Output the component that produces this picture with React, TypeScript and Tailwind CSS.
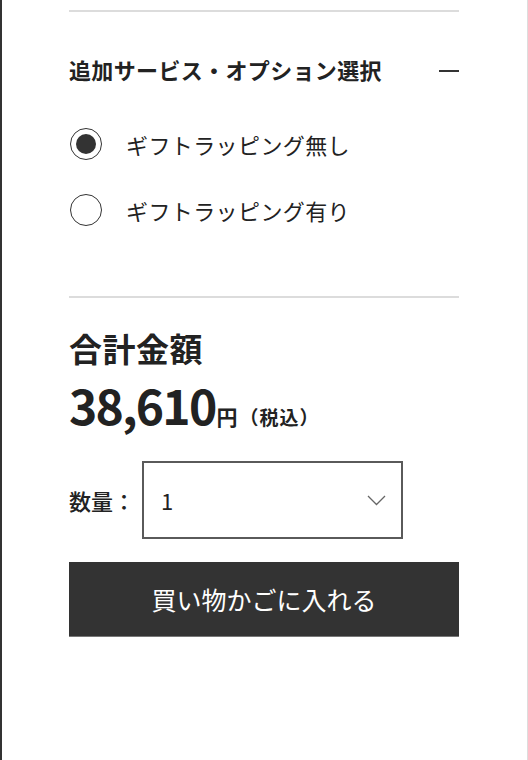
import React from "react";

const font = { fontFamily: '"Noto Sans CJK JP", "Noto Sans", sans-serif' };

function Radio({ checked, label }: { checked: boolean; label: string }) {
  return (
    <div className="flex items-center h-[44px]">
      <div className="ml-[1px] w-[32px] h-[32px] rounded-full border-[1.5px] border-[#333] flex items-center justify-center shrink-0">
        {checked && <div className="w-[20px] h-[20px] rounded-full bg-[#333]" />}
      </div>
      <span className="ml-[24px] text-[22px] leading-[30px] tracking-[0.4px] text-[#222]">{label}</span>
    </div>
  );
}

export default function App() {
  return (
    <div
      className="w-[528px] h-[760px] bg-white border-l-2 border-l-[#333] border-r border-r-[#dddddd] overflow-hidden"
      style={font}
    >
      <div className="ml-[67px] w-[390px]">
        <div className="mt-[10px] h-[2px] bg-[#dcdcdc]" />
        <div className="mt-[33px] h-[48px] flex items-center justify-between">
          <span className="text-[22px] font-bold text-[#222] leading-[30px] tracking-[0.35px]">追加サービス・オプション選択</span>
          <div className="w-[20px] h-[2px] bg-[#333] mt-[4px]" />
        </div>
        <div className="mt-[29px] flex flex-col gap-[22px]">
          <Radio checked label="ギフトラッピング無し" />
          <Radio checked={false} label="ギフトラッピング有り" />
        </div>
        <div className="mt-[64px] h-[2px] bg-[#dcdcdc]" />
        <div className="mt-[30px] h-[40px] flex items-center text-[33px] font-bold text-[#222] leading-[40px] tracking-[0.5px]">合計金額</div>
        <div className="mt-[8px] flex items-baseline leading-[56px] text-[#222] font-bold">
          <span className="text-[48px] tracking-[-1.8px]">38,610</span>
          <span className="text-[21px] ml-[1px]">円</span>
          <span className="text-[19px] ml-[2px] tracking-[1px]">（税込）</span>
        </div>
        <div className="mt-[16px] flex items-center">
          <span className="text-[22px] font-medium text-[#222] leading-[30px]">数量：</span>
          <div className="ml-[7px] w-[261px] h-[78px] border-2 border-[#5a5a5a] flex items-center justify-between pl-[17px] pr-[15px]">
            <span className="text-[22px] text-[#222]">1</span>
            <svg width="19" height="11" viewBox="0 0 19 11" fill="none">
              <path d="M1 1 L9.5 9.5 L18 1" stroke="#666" strokeWidth="1.3" />
            </svg>
          </div>
        </div>
        <div className="mt-[23px] h-[75px] bg-[#333333] border-b border-b-[#777] flex items-center justify-center">
          <span className="text-white text-[25px] leading-[34px]">買い物かごに入れる</span>
        </div>
      </div>
    </div>
  );
}
